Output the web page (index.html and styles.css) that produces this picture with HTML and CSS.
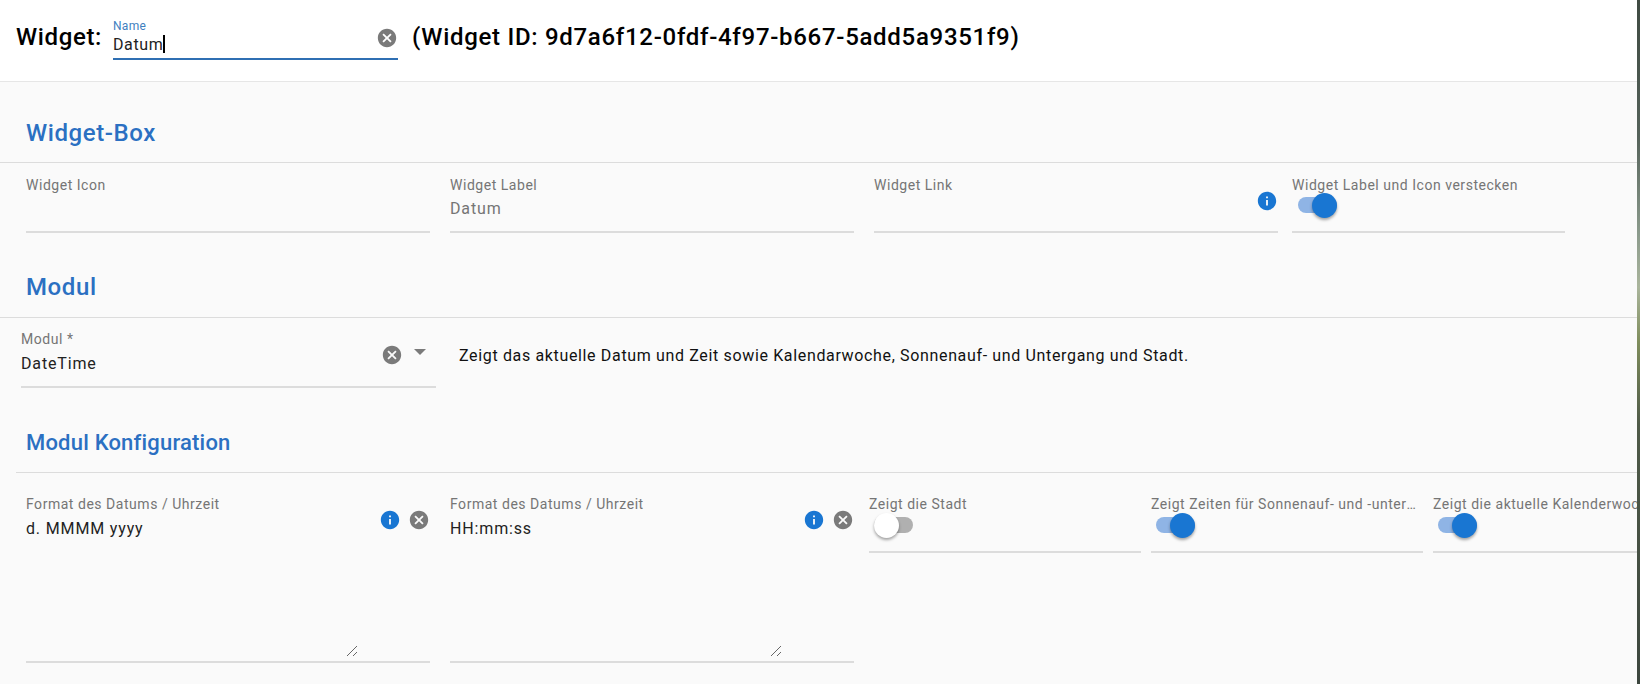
FILE: index.html
```html
<!DOCTYPE html>
<html lang="de">
<head>
<meta charset="utf-8">
<title>Widget</title>
<link rel="stylesheet" href="styles.css">
</head>
<body>
<svg class="defs" width="0" height="0">
  <symbol id="clear" viewBox="0 0 24 24"><path d="M12 2C6.47 2 2 6.47 2 12s4.47 10 10 10 10-4.47 10-10S17.53 2 12 2zm5 13.59L15.59 17 12 13.41 8.41 17 7 15.59 10.59 12 7 8.41 8.41 7 12 10.59 15.59 7 17 8.41 13.41 12 17 15.59z"/></symbol>
  <symbol id="info" viewBox="0 0 24 24"><path d="M12 2C6.48 2 2 6.48 2 12s4.48 10 10 10 10-4.48 10-10S17.52 2 12 2zm1 15h-2v-6h2v6zm0-8h-2V7h2v2z"/></symbol>
</svg>
<div class="page">
<header class="top">
  <span class="top-title">Widget:</span>
  <div class="name-field">
    <span class="name-label">Name</span>
    <div class="name-row"><span class="name-value">Datum</span><span class="caret"></span></div>
    <svg class="icon clear name-clear"><use href="#clear"/></svg>
  </div>
  <span class="top-id">(Widget ID: 9d7a6f12-0fdf-4f97-b667-5add5a9351f9)</span>
</header>
<main class="content">
  <h2 class="section box-title">Widget-Box</h2>
  <div class="row row-box">
    <div class="field w-404"><label class="label">Widget Icon</label><div class="value"></div></div>
    <div class="field w-404"><label class="label">Widget Label</label><div class="value muted">Datum</div></div>
    <div class="field w-404"><label class="label">Widget Link</label><div class="value"></div><svg class="icon info link-info"><use href="#info"/></svg></div>
    <div class="field w-273 hide-field"><label class="label">Widget Label und Icon verstecken</label><div class="value"><span class="switch on"></span></div></div>
  </div>
  <h2 class="section modul-title">Modul</h2>
  <div class="row row-modul">
    <div class="field w-415"><label class="label">Modul *</label><div class="value dark">DateTime</div>
      <svg class="icon clear modul-clear"><use href="#clear"/></svg><span class="arrow"></span></div>
    <p class="desc">Zeigt das aktuelle Datum und Zeit sowie Kalendarwoche, Sonnenauf- und Untergang und Stadt.</p>
  </div>
  <h2 class="section konfig-title">Modul Konfiguration</h2>
  <div class="row row-konfig">
    <div class="field area w-404"><label class="label">Format des Datums / Uhrzeit</label><div class="value dark">d. MMMM yyyy</div>
      <svg class="icon info area-info"><use href="#info"/></svg><svg class="icon clear area-clear"><use href="#clear"/></svg>
      <svg class="grip" viewBox="0 0 12 12"><path d="M1 11 11 1M7 11l4-4"/></svg></div>
    <div class="field area w-404"><label class="label">Format des Datums / Uhrzeit</label><div class="value dark">HH:mm:ss</div>
      <svg class="icon info area-info"><use href="#info"/></svg><svg class="icon clear area-clear"><use href="#clear"/></svg>
      <svg class="grip" viewBox="0 0 12 12"><path d="M1 11 11 1M7 11l4-4"/></svg></div>
    <div class="toggles">
      <div class="field w-272"><label class="label">Zeigt die Stadt</label><div class="value"><span class="switch"></span></div></div>
      <div class="field w-272"><label class="label ellipsis">Zeigt Zeiten für Sonnenauf- und -untergang</label><div class="value"><span class="switch on"></span></div></div>
      <div class="field w-272"><label class="label">Zeigt die aktuelle Kalenderwoche</label><div class="value"><span class="switch on"></span></div></div>
    </div>
  </div>
</main>
</div>
<div class="edge"></div>
</body>
</html>
```
FILE: styles.css
```css
* { box-sizing: border-box; }
html, body { margin: 0; height: 100%; overflow: hidden; }
body { display: flex; width: 1640px; height: 684px; background: #fafafa; font-family: Roboto, "Liberation Sans", sans-serif; color: #000; }
.defs { position: absolute; }
.page { width: 1637px; height: 684px; flex: none; overflow: hidden; }
.edge { width: 3px; flex: none; background: linear-gradient(#3f4a42 0, #55625a 20%, #8b9a8c 34%, #aab59c 42%, #7f8d5c 50%, #4f5a48 62%, #3c463e 100%); }
.top { height: 82px; background: #fff; border-bottom: 1px solid #e6e6e6; display: flex; align-items: flex-start; padding-left: 16px; }
.top-title { width: 97px; flex: none; font-size: 24px; line-height: 28px; font-weight: 500; margin-top: 23px; letter-spacing: .65px; }
.top-id { font-size: 24px; line-height: 28px; font-weight: 500; margin: 23px 0 0 14px; letter-spacing: .7px; white-space: nowrap; }
.name-field { position: relative; flex: none; width: 285px; height: 60px; border-bottom: 2px solid #2f6fb3; padding-top: 19px; }
.name-label { display: block; font-size: 12px; line-height: 14px; color: #3f7fbf; letter-spacing: .3px; }
.name-row { display: flex; align-items: center; height: 22px; font-size: 16px; color: #222; letter-spacing: .6px; }
.caret { width: 2px; height: 18px; background: #000; }
.icon { position: absolute; width: 22px; height: 22px; }
.clear { fill: #7a7a7a; }
.info { fill: #1976d2; }
.name-clear { left: 263px; top: 27px; }
.section { margin: 0; color: #2b70c2; font-weight: 500; font-size: 24px; line-height: 28px; letter-spacing: .6px; }
.box-title { padding: 37px 0 0 26px; height: 81px; border-bottom: 1px solid #dcdcdc; }
.modul-title { padding: 39px 0 0 26px; height: 84px; border-bottom: 1px solid #dcdcdc; }
.konfig-title { padding: 33px 0 0 10px; height: 77px; border-bottom: 1px solid #dcdcdc; margin-left: 16px; font-size: 22px; letter-spacing: .2px; }
.row { display: flex; }
.row-box { padding-left: 26px; gap: 20px; height: 71px; }
.row-modul { padding-left: 21px; height: 78px; }
.row-konfig { padding-left: 26px; gap: 20px; }
.field { position: relative; border-bottom: 2px solid #dcdcdc; padding-top: 14px; height: 70px; flex: none; }
.w-404 { width: 404px; }
.w-273 { width: 273px; }
.w-272 { width: 272px; }
.w-415 { width: 415px; }
.hide-field { margin-left: -6px; }
.hide-field .switch { margin-left: 6px; }
.label { display: block; font-size: 14px; line-height: 16px; color: #757575; letter-spacing: .53px; white-space: nowrap; }
.ellipsis { overflow: hidden; text-overflow: ellipsis; }
.value { font-size: 16px; line-height: 24px; margin-top: 4px; letter-spacing: .85px; }
.row-modul .value, .row-konfig .value { margin-top: 5px; }
.muted { color: #757575; }
.dark { color: #222; }
.link-info { left: 382px; top: 27px; }
.switch { display: block; position: relative; width: 39px; height: 16px; margin: 3px 0 0 5px; border-radius: 8px; background: #b0b0b0; }
.switch::after { content: ""; position: absolute; left: 0; top: -4px; width: 25px; height: 25px; border-radius: 50%; background: #fff; box-shadow: 0 2px 3px rgba(0,0,0,.35); }
.switch.on { background: #8fb4e5; }
.switch.on::after { left: 14px; background: #1976d2; }
.row-modul .field { padding-top: 13px; height: 70px; }
.modul-clear { left: 360px; top: 26px; }
.arrow { position: absolute; left: 393px; top: 31px; width: 0; height: 0; border-left: 6px solid transparent; border-right: 6px solid transparent; border-top: 6px solid #7a7a7a; }
.desc { margin: 27px 0 0 23px; font-size: 16px; line-height: 22px; color: #111; letter-spacing: .65px; white-space: nowrap; }
.row-konfig .field { padding-top: 23px; height: 80px; }
.row-konfig .field.area { height: 190px; }
.toggles { display: flex; gap: 10px; margin-left: -5px; }
.area-info { left: 353px; top: 36px; }
.area-clear { left: 382px; top: 36px; }
.grip { position: absolute; left: 320px; top: 172px; width: 12px; height: 12px; fill: none; stroke: #666; stroke-width: 1; }
```
